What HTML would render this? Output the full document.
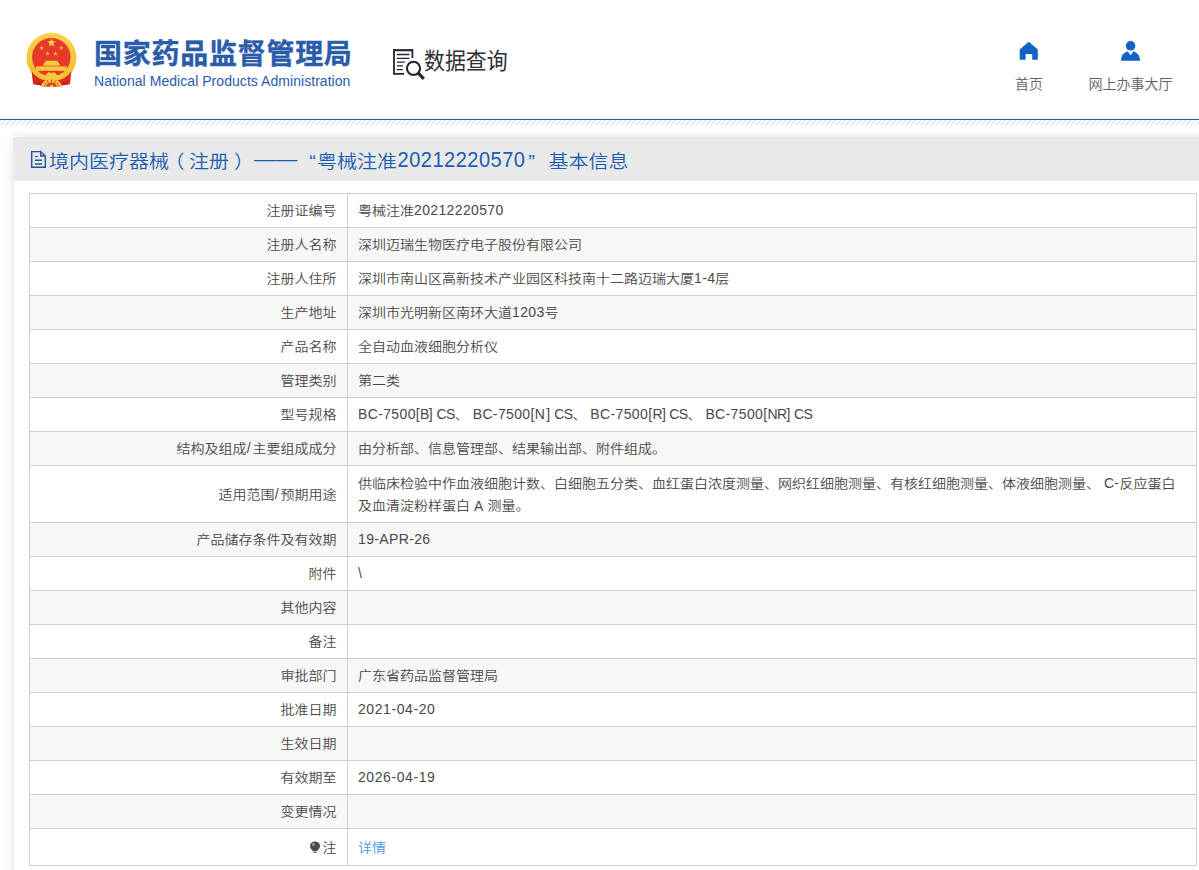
<!DOCTYPE html>
<html lang="zh-CN">
<head>
<meta charset="utf-8">
<title>数据查询</title>
<style>
html,body{margin:0;padding:0;}
body{width:1199px;height:870px;overflow:hidden;background:#fff;position:relative;
  font-family:"Liberation Sans","Noto Sans CJK SC",sans-serif;color:#333;}
.abs{position:absolute;}
#hdr{position:absolute;left:0;top:0;width:1199px;height:119px;background:#fff;}
#blueline{position:absolute;left:0;top:119px;width:1199px;height:1px;background:#2d5a92;}
#hatch{position:absolute;left:0;top:120px;width:1199px;height:5px;}
#cn{left:94.1px;top:35px;-webkit-text-stroke:0.35px #2a5caa;font-size:28px;line-height:40px;font-weight:700;color:#2a5caa;white-space:nowrap;letter-spacing:0.72px;}
#en{left:94px;top:71.3px;font-size:14px;line-height:20px;color:#2a5caa;white-space:nowrap;letter-spacing:0.05px;}
#sj{left:424.2px;top:46.4px;font-size:22.4px;line-height:32px;color:#2e2e34;white-space:nowrap;transform:scaleX(0.934);transform-origin:0 0;}
.nav{font-size:14px;line-height:20px;color:#606060;font-weight:350;white-space:nowrap;text-align:center;}
#panel{position:absolute;left:13px;top:137px;width:1200px;height:760px;background:#fff;
  box-shadow:0 0 10px rgba(0,0,0,0.11);}
#panel:before{content:"";position:absolute;left:0;top:44px;width:1px;height:720px;background:#efefef;}
#ph{position:absolute;left:0;top:0;width:1200px;height:44px;background:#e9e9e9;}
#pt{position:absolute;left:36px;top:8px;font-size:20px;line-height:30px;color:#1b5db0;white-space:nowrap;font-weight:350;transform:scaleY(0.92);transform-origin:0 100%;}
#pt span{display:inline-block;vertical-align:top;}
#pt .p1{position:relative;left:-4.5px;}
#pt .p2{position:relative;left:5px;}
#pt .yx{margin-left:1px;}
#pt .ds{position:relative;top:-2.8px;margin-left:5px;width:43.3px;transform:scaleX(1.0825);transform-origin:0 50%;}
#pt .q1{margin-left:12px;}
#pt .q2{margin-left:2.9px;}
#pt .dg{letter-spacing:0.5px;transform:scaleY(1.22);transform-origin:0 73%;position:relative;top:-1.1px;margin-left:0.6px;}
#pt .bi{margin-left:13.5px;}
table{position:absolute;left:16px;top:56px;width:1168px;border-collapse:collapse;table-layout:fixed;font-size:14px;line-height:23px;}
th,td{border:1px solid #cfcfcf;padding:5.1px 10px 4.9px;font-weight:350;vertical-align:middle;}
.c{display:inline-block;transform:scaleY(0.93);transform-origin:50% 50%;}
.l,.u,.dt,.sl{display:inline-block;transform:translateY(0.8px) scaleY(1.13);transform-origin:0 71%;}
.l{letter-spacing:0.36px;}
.u{letter-spacing:-0.6px;}
.sl{letter-spacing:1.8px;margin-left:0.4px}
.dt{letter-spacing:0.58px;}
th{text-align:right;width:296.5px;color:#484848;padding-right:10.5px;}
td{text-align:left;color:#484848;}
tr:nth-child(even) th,tr:nth-child(even) td{background:#f7f7f7;}
a{color:#4f96e6;text-decoration:none;}
tr.wr td{line-height:24.2px;padding:3.8px 10px;}
tr.wr th{padding-top:5.5px;padding-bottom:4.5px;}
tr.last th,tr.last td{padding-top:7px;padding-bottom:6px;}
</style>
</head>
<body>
<div id="hdr">
  <svg class="abs" style="left:20px;top:26px" width="64" height="66" viewBox="0 0 64 66">
    <defs>
      <linearGradient id="gd" x1="0" y1="0" x2="0" y2="1"><stop offset="0" stop-color="#f8d24a"/><stop offset="1" stop-color="#f2b92c"/></linearGradient>
    </defs>
    <circle cx="31.5" cy="31.8" r="25" fill="url(#gd)"/>
    <circle cx="31.3" cy="31.2" r="19.2" fill="#e8392b"/>
    <path d="M11.6 45.6 Q16 51.2 21 53.2 L25.5 54.6 L24.4 60.8 L21.5 59.6 L13 58 Z" fill="#d9281d"/>
    <path d="M51.4 45.6 Q47 51.2 42 53.2 L37.5 54.6 L38.6 60.8 L41.5 59.6 L50 58 Z" fill="#d9281d"/>
    <path d="M13 58 L21.5 59.6 L20 56 Z" fill="#bf2017"/>
    <path d="M50 58 L41.5 59.6 L43 56 Z" fill="#bf2017"/>
    <path d="M21.2 60.8 Q21.8 53.6 31.5 53.6 Q41.2 53.6 41.8 60.8 Z" fill="#f5c636"/>
    <path d="M26.2 60.8 Q26.8 56.6 31.5 56.6 Q36.2 56.6 36.8 60.8 Z" fill="#df3c28"/>
    <path d="M29.3 60.8 Q29.6 58.7 31.5 58.7 Q33.4 58.7 33.7 60.8 Z" fill="#f5c636"/>
    <path d="M24.2 60.8 L25.8 57 M38.8 60.8 L37.2 57 M31.5 53.6 V56.6 M27.2 54.3 L28.4 57.2 M35.8 54.3 L34.6 57.2" stroke="#df3c28" stroke-width="0.9" fill="none"/>
    <path d="M22 48.5 Q25 51.5 27.3 47.2 Q29.4 45.4 31.5 47.4 Q33.6 45.4 35.7 47.2 Q38 51.5 41 48.5 L42 51 Q37 55.4 31.5 53 Q26 55.4 21 51 Z" fill="#f7cb3c"/>
    <polygon points="0,-1 0.2245,-0.309 0.951,-0.309 0.3633,0.118 0.5878,0.809 0,0.382 -0.5878,0.809 -0.3633,0.118 -0.951,-0.309 -0.2245,-0.309" transform="translate(31.5,16.8) scale(4.8)" fill="#f9d84c"/>
    <polygon points="0,-1 0.2245,-0.309 0.951,-0.309 0.3633,0.118 0.5878,0.809 0,0.382 -0.5878,0.809 -0.3633,0.118 -0.951,-0.309 -0.2245,-0.309" transform="translate(21.8,22) scale(2.3)" fill="#f9d84c"/>
    <polygon points="0,-1 0.2245,-0.309 0.951,-0.309 0.3633,0.118 0.5878,0.809 0,0.382 -0.5878,0.809 -0.3633,0.118 -0.951,-0.309 -0.2245,-0.309" transform="translate(41.2,22) scale(2.3)" fill="#f9d84c"/>
    <polygon points="0,-1 0.2245,-0.309 0.951,-0.309 0.3633,0.118 0.5878,0.809 0,0.382 -0.5878,0.809 -0.3633,0.118 -0.951,-0.309 -0.2245,-0.309" transform="translate(27.6,27.6) scale(2.3)" fill="#f9d84c"/>
    <polygon points="0,-1 0.2245,-0.309 0.951,-0.309 0.3633,0.118 0.5878,0.809 0,0.382 -0.5878,0.809 -0.3633,0.118 -0.951,-0.309 -0.2245,-0.309" transform="translate(35.5,27.6) scale(2.3)" fill="#f9d84c"/>
    <path d="M25.6 34.8 L37.6 34.8 L38.3 36.4 L40.4 39.4 L22.6 39.4 L24.8 36.4 Z" fill="#f7cc3e"/>
    <rect x="16.2" y="40.4" width="30.4" height="4.4" fill="#f7c93a"/>
    <rect x="24" y="39.4" width="15" height="1" fill="#f0a82e"/>
  </svg>
  <svg class="abs" style="left:390px;top:46px" width="38" height="36" viewBox="390 46 38 36" fill="none" stroke="#262633">
    <path d="M412.4 58 V50.6 M394 49.2 V74.8 M393.1 73.9 H404" stroke-width="1.8"/>
    <path d="M393.1 50.2 H413.3" stroke-width="2.2"/>
    <path d="M396.8 54.5 H409.4 M396.8 58.3 H409.4 M396.8 62.1 H404.8 M396.8 65.8 H402.8 M396.8 69.6 H402.8" stroke-width="1.3"/>
    <circle cx="413.5" cy="68.3" r="6.6" stroke-width="2.1"/>
    <path d="M418.4 73.2 L423.8 78.8" stroke-width="3.2"/>
  </svg>
  <svg class="abs" style="left:1015px;top:38px" width="28" height="26" viewBox="1015 38 28 26">
    <path d="M1028.7 41.7 L1037.8 49.4 V59.7 H1032.2 V54 H1025.6 V59.7 H1019.7 V49.4 Z" fill="#1263c4"/>
  </svg>
  <svg class="abs" style="left:1116px;top:38px" width="30" height="26" viewBox="1116 38 30 26">
    <circle cx="1130.6" cy="45.8" r="4.8" fill="#1263c4"/>
    <path d="M1120.8 60.7 Q1121.2 53.5 1127.6 51.3 L1130.6 55.2 L1133.6 51.3 Q1139.8 53.5 1140.2 60.7 Z" fill="#1263c4"/>
  </svg>
  <div id="cn" class="abs">国家药品监督管理局</div>
  <div id="en" class="abs">National Medical Products Administration</div>
  <div id="sj" class="abs">数据查询</div>
  <div class="abs nav" style="left:1009px;top:73.5px;width:40px;">首页</div>
  <div class="abs nav" style="left:1080.5px;top:73.5px;width:100px;">网上办事大厅</div>
</div>
<div id="blueline"></div>
<svg id="hatch" width="1199" height="5" shape-rendering="crispEdges"><defs><pattern id="hp" width="5" height="5" patternUnits="userSpaceOnUse" fill="#d4d4d4"><rect x="0" y="0" width="1" height="1"/><rect x="4" y="1" width="1" height="1"/><rect x="3" y="2" width="1" height="1"/><rect x="2" y="3" width="1" height="1"/><rect x="1" y="4" width="1" height="1"/></pattern></defs><rect width="1199" height="5" fill="url(#hp)" style="color:#c6c6c6"/></svg>
<div id="panel">
  <div id="ph">
    <svg style="position:absolute;left:16px;top:12px" width="20" height="22" viewBox="29 149 20 22" fill="none" stroke="#1f579f">
      <path d="M40.7 151.6 H31.7 V167.2 H45.3 V156 L40.7 151.6 V156 H45.3" stroke-width="1.45"/>
      <path d="M34.9 156.5 H37.8" stroke-width="1.1"/>
      <path d="M34.9 160.2 H42.1 M34.9 163.9 H42.1" stroke-width="1.5"/>
    </svg>
    <div id="pt"><span>境内医疗器械</span><span class="p1">（</span><span>注册</span><span class="p2">）</span><span class="ds">——</span><span class="q1">“</span><span class="yx">粤械注准</span><span class="dg">20212220570</span><span class="q2">”</span><span class="bi">基本信息</span></div>
  </div>
  <table>
    <tr><th><span class="c">注册证编号</span></th><td><span class="c">粤械注准<span class="l">20212220570</span></span></td></tr>
    <tr><th><span class="c">注册人名称</span></th><td><span class="c">深圳迈瑞生物医疗电子股份有限公司</span></td></tr>
    <tr><th><span class="c">注册人住所</span></th><td><span class="c">深圳市南山区高新技术产业园区科技南十二路迈瑞大厦<span class="l">1-4</span>层</span></td></tr>
    <tr><th><span class="c">生产地址</span></th><td><span class="c">深圳市光明新区南环大道<span class="l">1203</span>号</span></td></tr>
    <tr><th><span class="c">产品名称</span></th><td><span class="c">全自动血液细胞分析仪</span></td></tr>
    <tr><th><span class="c">管理类别</span></th><td><span class="c">第二类</span></td></tr>
    <tr><th><span class="c">型号规格</span></th><td><span class="c"><span class="l">BC-7500[</span><span class="u" style="word-spacing:1.2px">B] CS</span>、 <span class="l">BC-7500[</span><span class="u" style="word-spacing:1.4px"><span style="letter-spacing:1.4px">N</span>] CS</span>、 <span class="l">BC-7500[</span><span class="u" style="word-spacing:0.8px">R] CS</span>、 <span class="l">BC-7500[</span><span class="u" style="word-spacing:0.9px">NR] CS</span></span></td></tr>
    <tr><th><span class="c">结构及组成<span class="sl">/</span>主要组成成分</span></th><td><span class="c">由分析部、信息管理部、结果输出部、附件组成。</span></td></tr>
    <tr class="wr"><th><span class="c">适用范围<span class="sl">/</span>预期用途</span></th><td><span class="c">供临床检验中作血液细胞计数、白细胞五分类、血红蛋白浓度测量、网织红细胞测量、有核红细胞测量、体液细胞测量、 <span class="l">C-</span>反应蛋白<br>及血清淀粉样蛋白 <span class="l">A</span> 测量。</span></td></tr>
    <tr><th><span class="c">产品储存条件及有效期</span></th><td><span class="c"><span class="l">19-APR-26</span></span></td></tr>
    <tr><th><span class="c">附件</span></th><td><span class="c"><span class="l">\</span></span></td></tr>
    <tr><th><span class="c">其他内容</span></th><td></td></tr>
    <tr><th><span class="c">备注</span></th><td></td></tr>
    <tr><th><span class="c">审批部门</span></th><td><span class="c">广东省药品监督管理局</span></td></tr>
    <tr><th><span class="c">批准日期</span></th><td><span class="c"><span class="dt">2021-04-20</span></span></td></tr>
    <tr><th><span class="c">生效日期</span></th><td></td></tr>
    <tr><th><span class="c">有效期至</span></th><td><span class="c"><span class="dt">2026-04-19</span></span></td></tr>
    <tr><th><span class="c">变更情况</span></th><td></td></tr>
    <tr class="last"><th><span class="c"><svg width="12" height="14" viewBox="309 840 12 14" style="vertical-align:-2px;margin-right:2px"><circle cx="315" cy="846" r="5" fill="#4a4a4a"/><path d="M312.6 849.5 H317.4 V851.4 H312.6 Z" fill="#4a4a4a"/><rect x="313.3" y="852.2" width="3.4" height="1" fill="#555"/><circle cx="313.4" cy="844.4" r="1.5" fill="#9a9a9a"/></svg>注</span></th><td><span class="c"><a>详情</a></span></td></tr>
  </table>
</div>
</body>
</html>
